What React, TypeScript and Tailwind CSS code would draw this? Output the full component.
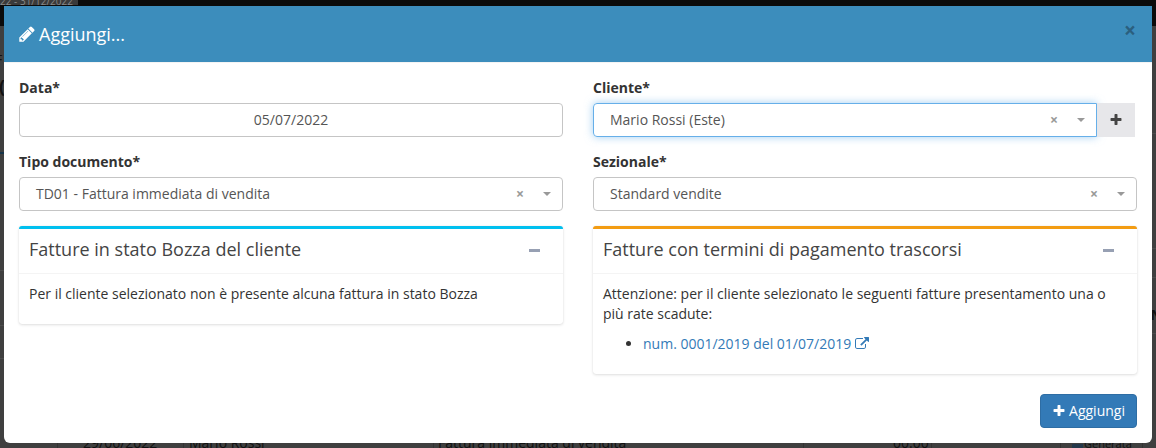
const fa = {
  pencil:
    "M491 1536l91-91-235-235-91 91v107h128v128h107zm523-928q0-22-22-22-10 0-17 7l-542 542q-7 7-7 17 0 22 22 22 10 0 17-7l542-542q7-7 7-17zm-54-192l416 416-832 832h-416v-416zm683 96q0 53-37 90l-166 166-416-416 166-165q36-38 90-38 53 0 91 38l235 234q37 39 37 91z",
  plus: "M1600 736v192q0 40-28 68t-68 28h-416v416q0 40-28 68t-68 28h-192q-40 0-68-28t-28-68v-416h-416q-40 0-68-28t-28-68v-192q0-40 28-68t68-28h416v-416q0-40 28-68t68-28h192q40 0 68 28t28 68v416h416q40 0 68 28t28 68z",
  external:
    "M1408 928v320q0 119-84.5 203.5t-203.5 84.5h-832q-119 0-203.5-84.5t-84.5-203.5v-832q0-119 84.5-203.5t203.5-84.5h704q14 0 23 9t9 23v64q0 14-9 23t-23 9h-704q-66 0-113 47t-47 113v832q0 66 47 113t113 47h832q66 0 113-47t47-113v-320q0-14 9-23t23-9h64q14 0 23 9t9 23zm384-864v512q0 26-19 45t-45 19-45-19l-176-176-652 652q-10 10-23 10t-23-10l-114-114q-10-10-10-23t10-23l652-652-176-176q-19-19-19-45t19-45 45-19h512q26 0 45 19t19 45z",
};

function Icon({ d, className }: { d: string; className: string }) {
  return (
    <svg viewBox="0 0 1792 1792" fill="currentColor" className={className}>
      <path d={d} />
    </svg>
  );
}

function Field({ label, children }: { label: string; children: React.ReactNode }) {
  return (
    <div className="mb-[15px]">
      <label className="mb-[5px] block text-sm font-bold leading-5 text-[#333]">{label}</label>
      {children}
    </div>
  );
}

function SelectBox({ value, focused }: { value: string; focused?: boolean }) {
  return (
    <div
      className={`flex h-[34px] flex-1 items-center border pl-4 pr-[11px] text-sm ${
        focused
          ? "rounded-l border-[#66afe9] shadow-[0_0_8px_rgba(102,175,233,.6)]"
          : "rounded border-[#c5c5c5]"
      }`}
    >
      <span className="flex-1 text-[#555]">{value}</span>
      <span className="mr-[19px] text-sm font-bold leading-none text-[#999]">×</span>
      <span className="h-0 w-0 border-x-4 border-t-[4px] border-x-transparent border-t-[#999]" />
    </div>
  );
}

function Box({
  title,
  accent,
  children,
}: {
  title: string;
  accent: string;
  children: React.ReactNode;
}) {
  return (
    <div
      className={`rounded-[3px] border-t-[3px] bg-white shadow-[0_0_1px_rgba(0,0,0,.12),0_1px_3px_rgba(0,0,0,.12)] ${accent}`}
    >
      <div className="flex h-[45px] items-center justify-between border-b border-[#f4f4f4] pb-[2px] pl-[10px] pr-[23px]">
        <h3 className="pb-[2px] text-lg text-[#444]">{title}</h3>
        <span className="h-[3px] w-[11px] bg-[#97a0b3]" />
      </div>
      <div className="p-[10px] text-sm leading-5 text-[#333]">{children}</div>
    </div>
  );
}

// bits of the page that show round the modal, dimmed by the overlay
const stripLines = [
  { y: 133, x: "right-0" },
  { y: 248, x: "right-0" },
  { y: 277, x: "right-0" },
  { y: 333, x: "right-0" },
  { y: 270, x: "left-0" },
  { y: 325, x: "left-0" },
  { y: 358, x: "left-0" },
];

const rowDividers = [57, 183, 433, 803, 931, 1060, 1142];

function Backdrop() {
  return (
    <>
      <div className="absolute left-0 right-0 top-0 h-[26px] bg-[#0b0b0b]" />
      <div className="absolute left-0 top-0 flex h-[5px] w-[78px] justify-end overflow-hidden bg-[#3a3a3a] pr-[5px] text-[10px] leading-[3px] text-[#888]">
        22 - 31/12/2022
      </div>
      <div className="absolute left-[-5px] top-[50px] text-sm text-[#111]">F</div>
      <div className="absolute left-[-1px] top-[72px] text-lg font-bold text-[#111]">(</div>
      <div className="absolute left-0 top-[152px] h-[2px] w-1 bg-[#16344a]" />
      <div className="absolute right-[-6px] top-[305px] text-sm font-bold text-[#111]">N</div>
      {stripLines.map((line) => (
        <div
          key={`${line.x}-${line.y}`}
          className={`absolute h-px w-1 bg-[#4c4c4c] ${line.x}`}
          style={{ top: line.y }}
        />
      ))}
      {rowDividers.map((x) => (
        <div key={x} className="absolute top-[443px] h-[5px] w-px bg-[#333]" style={{ left: x }} />
      ))}
      <div className="absolute left-[83px] top-[433px] text-sm leading-5 text-[#111]">29/06/2022</div>
      <div className="absolute left-[189px] top-[433px] text-sm leading-5 text-[#111]">Mario Rossi</div>
      <div className="absolute left-[438px] top-[433px] text-sm leading-5 text-[#111]">
        Fattura immediata di vendita
      </div>
      <div className="absolute left-[893px] top-[433px] text-sm leading-5 text-[#111]">00:00</div>
      <div className="absolute left-[1072px] top-[444px] h-1 w-[11px] bg-[#24384a]" />
      <div className="absolute left-[1084px] top-[436px] text-[11px] leading-4 text-[#111]">Generata</div>
    </>
  );
}

export default function App() {
  return (
    <div className="relative h-[448px] w-[1156px] overflow-hidden bg-[#3f3f3f] pl-1 pt-[6px] [font-family:'Open_Sans',sans-serif]">
      <Backdrop />

      <div className="relative h-[437px] w-[1148px] overflow-hidden rounded-b-md bg-white">
        <div className="flex h-[56px] justify-between bg-[#3c8dbc] px-[15px] text-white">
          <h4 className="flex items-center gap-[3px] text-lg">
            <Icon d={fa.pencil} className="-ml-px h-[18px] w-[18px]" />
            Aggiungi...
          </h4>
          <span className="mr-px mt-[14px] text-[21px] font-bold leading-5 text-[#2b5f7f]">×</span>
        </div>
        <div className="h-px bg-[#f4f4f4]" />

        <div className="px-[15px] pt-[15px]">
          <div className="grid grid-cols-2 gap-x-[30px]">
            <Field label="Data*">
              <div className="flex h-[34px] items-center justify-center rounded border border-[#c5c5c5] text-sm text-[#555]">
                05/07/2022
              </div>
            </Field>
            <Field label="Cliente*">
              <div className="flex pr-[2px]">
                <SelectBox value="Mario Rossi (Este)" focused />
                <div className="flex w-[38px] items-center justify-center bg-[#e7e7ea] text-[#444]">
                  <Icon d={fa.plus} className="h-[14px] w-[14px]" />
                </div>
              </div>
            </Field>
            <Field label="Tipo documento*">
              <SelectBox value="TD01 - Fattura immediata di vendita" />
            </Field>
            <Field label="Sezionale*">
              <SelectBox value="Standard vendite" />
            </Field>

            <div className="self-start">
              <Box title="Fatture in stato Bozza del cliente" accent="border-[#00c0ef]">
                <p className="mb-[10px]">
                  Per il cliente selezionato non è presente alcuna fattura in stato Bozza
                </p>
              </Box>
            </div>
            <div className="self-start">
              <Box title="Fatture con termini di pagamento trascorsi" accent="border-[#f39c12]">
                <p className="mb-[10px]">
                  Attenzione: per il cliente selezionato le seguenti fatture presentamento una o
                  più rate scadute:
                </p>
                <ul className="mb-[10px] list-disc pl-10">
                  <li>
                    <span className="inline-flex items-center gap-1 text-[#337ab7]">
                      num. 0001/2019 del 01/07/2019
                      <Icon d={fa.external} className="h-[14px] w-[14px]" />
                    </span>
                  </li>
                </ul>
              </Box>
            </div>
          </div>

          <div className="mt-[20px] flex justify-end">
            <button className="flex h-[34px] w-[97px] items-center justify-center gap-[3px] rounded border border-[#2e6da4] bg-[#337ab7] text-sm text-white">
              <Icon d={fa.plus} className="h-[14px] w-[14px]" />
              Aggiungi
            </button>
          </div>
        </div>
      </div>
    </div>
  );
}
